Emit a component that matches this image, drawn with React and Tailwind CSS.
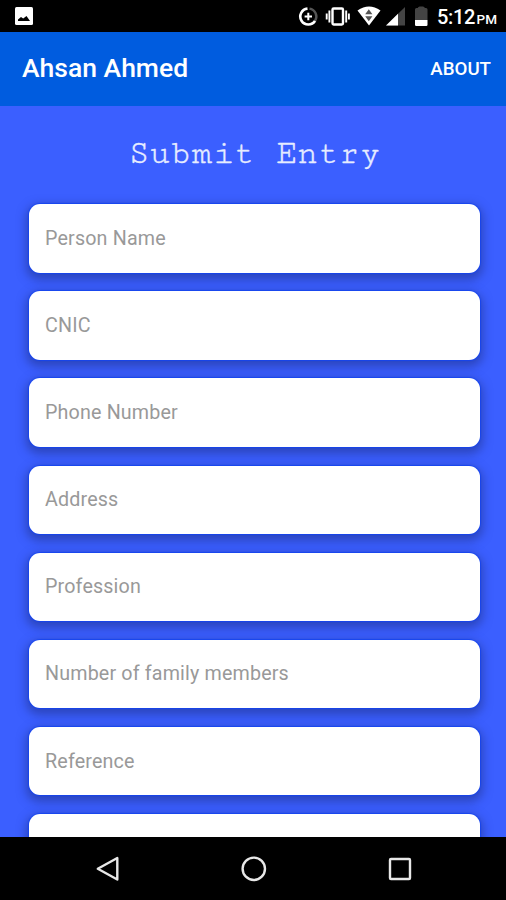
const FIELDS = [
  "Person Name",
  "CNIC",
  "Phone Number",
  "Address",
  "Profession",
  "Number of family members",
  "Reference",
  "",
];

export default function App() {
  return (
    <div className="flex h-[900px] w-[506px] flex-col overflow-hidden bg-[#3b5fff] font-['Roboto',sans-serif]">
      <StatusBar />
      <header className="flex h-[74px] shrink-0 items-center justify-between bg-[#005cdf] pr-[15px] pl-[22px] text-white">
        <h1 className="pb-[2px] text-[26.5px] font-medium">Ahsan Ahmed</h1>
        <button className="pt-px text-[18.7px] font-medium">ABOUT</button>
      </header>

      <main className="min-h-0 flex-1 overflow-hidden pr-[26px] pl-[29px]">
        <h2 className="mt-[27px] mb-[31.3px] h-10 text-center font-['Cutive_Mono','Liberation_Mono',monospace] text-[34.8px] leading-10 whitespace-nowrap text-[#e6ecff] [-webkit-text-stroke:0.3px_#e6ecff]">
          Submit Entry
        </h2>
        <form className="flex flex-col gap-[18.8px]">
          {FIELDS.map((label, i) => (
            <Field key={i} label={label} />
          ))}
        </form>
      </main>

      <NavBar />
    </div>
  );
}

function Field({ label }) {
  return (
    <input
      aria-label={label}
      placeholder={label}
      className="h-[68.3px] w-full shrink-0 rounded-[11px] bg-white px-4 text-[19.7px] tracking-[0.16px] shadow-[0_0_1px_1px_rgba(20,68,240,0.9),0_4px_10px_3px_rgba(30,45,130,0.5)] outline-none placeholder:text-[#999999]"
    />
  );
}

function StatusBar() {
  return (
    <div className="flex h-8 shrink-0 items-center justify-between bg-black pr-[9px] pl-[15px] text-white">
      {/* screenshot notification */}
      <svg width="18" height="18" viewBox="0 0 18 18">
        <rect width="18" height="18" rx="1.5" fill="#fff" />
        <path d="M3 14v-1.5l3-2.5 2.2 1.6L11.5 9l3.5 5z" fill="#000" />
      </svg>

      <div className="flex items-center">
        {/* data saver, vibrate, wifi, signal, battery */}
        <svg width="130" height="32" viewBox="298 0 130 32" fill="none">
          <path d="M307.5 8.6a8 8 0 1 0 7.6 12.2" stroke="#fff" strokeWidth="2.6" />
          <path d="M309.5 8.6a8 8 0 0 1 5.6 12.2" stroke="#555" strokeWidth="2.4" />
          <path d="M308.3 12.8v7.4M304.6 16.5h7.4" stroke="#fff" strokeWidth="2" />
          <rect x="332.5" y="8.5" width="10.5" height="16" rx="1.2" stroke="#fff" strokeWidth="2.4" />
          <path d="M329.4 10.5v12M326.7 13.5v6M346.2 10.5v12M348.9 13.5v6" stroke="#fff" strokeWidth="1.9" />
          <path d="M357.5 10.5Q369 2.5 380.5 10.5L369 25.5Z" fill="#fff" />
          <path d="M365.2 14.2l3.6-5 3.6 5zM365.2 16.2h7.2l-3.6 5z" fill="#555" />
          <path d="M386 25.5L405 7v18.5z" fill="#444" />
          <path d="M386 25.5l12-11.7v11.7z" fill="#fff" />
          <path d="M415 20V9.5q0-1.5 1.5-1.5h1.2q.5-1.5 2-1.5h3.2q1.5 0 2 1.5h1.1q1.5 0 1.5 1.5V20z" fill="#444" />
          <path d="M415 20h12.5v4.8q0 1.2-1.2 1.2h-10.1q-1.2 0-1.2-1.2z" fill="#fff" />
        </svg>
        <div className="ml-[9px] flex w-[60px] items-baseline justify-between pt-[2px] font-medium">
          <span className="text-[20px] leading-8 tracking-[-0.3px]">5:12</span>
          <span className="text-[13.5px]">PM</span>
        </div>
      </div>
    </div>
  );
}

function NavBar() {
  return (
    <nav className="z-10 flex h-[63px] shrink-0 items-start justify-between bg-black pt-[18px] pr-[93px] pl-[94px]">
      <svg width="28" height="28" viewBox="0 0 28 28" fill="none" stroke="#e8e8e8" strokeWidth="2.4">
        <path d="M23.3 3v21.5L3.8 13.8z" strokeLinejoin="round" />
      </svg>
      <svg width="28" height="28" viewBox="0 0 28 28" fill="none" stroke="#e8e8e8" strokeWidth="2.4">
        <circle cx="13.8" cy="13.8" r="11.2" />
      </svg>
      <svg width="28" height="28" viewBox="0 0 28 28" fill="none" stroke="#e8e8e8" strokeWidth="2.4">
        <rect x="5" y="4" width="20" height="20" rx="1" />
      </svg>
    </nav>
  );
}
